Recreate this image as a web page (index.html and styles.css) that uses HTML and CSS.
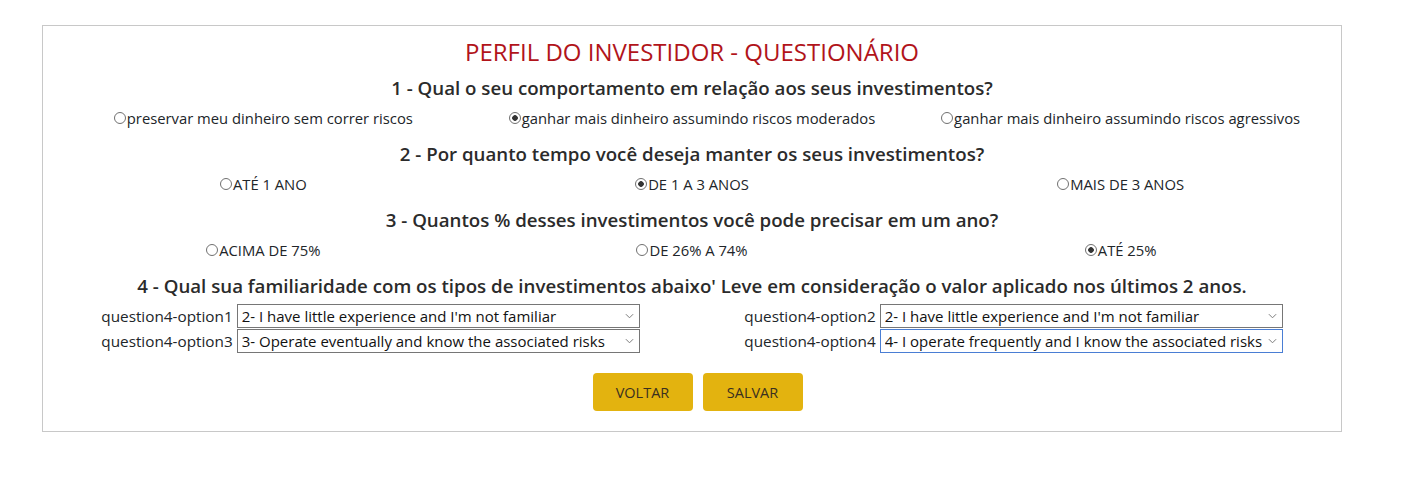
FILE: index.html
```html
<!DOCTYPE html>
<html lang="pt-BR">
<head>
<meta charset="utf-8">
<title>Perfil do Investidor</title>
<link rel="stylesheet" href="styles.css">
</head>
<body>
<div class="panel">
  <h1 class="title">PERFIL DO INVESTIDOR - QUESTIONÁRIO</h1>

  <section class="question">
    <h2 class="q-title">1 - Qual o seu comportamento em relação aos seus investimentos?</h2>
    <div class="options">
      <label class="opt"><input type="radio" name="q1">preservar meu dinheiro sem correr riscos</label>
      <label class="opt"><input type="radio" name="q1" checked>ganhar mais dinheiro assumindo riscos moderados</label>
      <label class="opt"><input type="radio" name="q1">ganhar mais dinheiro assumindo riscos agressivos</label>
    </div>
  </section>

  <section class="question">
    <h2 class="q-title">2 - Por quanto tempo você deseja manter os seus investimentos?</h2>
    <div class="options">
      <label class="opt"><input type="radio" name="q2">ATÉ 1 ANO</label>
      <label class="opt"><input type="radio" name="q2" checked>DE 1 A 3 ANOS</label>
      <label class="opt"><input type="radio" name="q2">MAIS DE 3 ANOS</label>
    </div>
  </section>

  <section class="question">
    <h2 class="q-title">3 - Quantos % desses investimentos você pode precisar em um ano?</h2>
    <div class="options">
      <label class="opt"><input type="radio" name="q3">ACIMA DE 75%</label>
      <label class="opt"><input type="radio" name="q3">DE 26% A 74%</label>
      <label class="opt"><input type="radio" name="q3" checked>ATÉ 25%</label>
    </div>
  </section>

  <section class="question q4">
    <h2 class="q-title">4 - Qual sua familiaridade com os tipos de investimentos abaixo' Leve em consideração o valor aplicado nos últimos 2 anos.</h2>
    <div class="selects">
      <div class="sel-row">
        <label class="sel-label" for="o1">question4-option1</label>
        <span class="sel-wrap">
          <select id="o1" class="sel">
            <option>1- I have no experience</option>
            <option selected>2- I have little experience and I'm not familiar</option>
            <option>3- Operate eventually and know the associated risks</option>
            <option>4- I operate frequently and I know the associated risks</option>
          </select>
          <svg class="chev" viewBox="0 0 10 6" width="9" height="6"><path d="M1 1 L5 5 L9 1" fill="none" stroke="#7a7a7a" stroke-width="1.1"/></svg>
        </span>
      </div>
      <div class="sel-row">
        <label class="sel-label" for="o2">question4-option2</label>
        <span class="sel-wrap">
          <select id="o2" class="sel">
            <option>1- I have no experience</option>
            <option selected>2- I have little experience and I'm not familiar</option>
            <option>3- Operate eventually and know the associated risks</option>
            <option>4- I operate frequently and I know the associated risks</option>
          </select>
          <svg class="chev" viewBox="0 0 10 6" width="9" height="6"><path d="M1 1 L5 5 L9 1" fill="none" stroke="#7a7a7a" stroke-width="1.1"/></svg>
        </span>
      </div>
      <div class="sel-row">
        <label class="sel-label" for="o3">question4-option3</label>
        <span class="sel-wrap">
          <select id="o3" class="sel">
            <option>1- I have no experience</option>
            <option>2- I have little experience and I'm not familiar</option>
            <option selected>3- Operate eventually and know the associated risks</option>
            <option>4- I operate frequently and I know the associated risks</option>
          </select>
          <svg class="chev" viewBox="0 0 10 6" width="9" height="6"><path d="M1 1 L5 5 L9 1" fill="none" stroke="#7a7a7a" stroke-width="1.1"/></svg>
        </span>
      </div>
      <div class="sel-row">
        <label class="sel-label" for="o4">question4-option4</label>
        <span class="sel-wrap">
          <select id="o4" class="sel sel-focus">
            <option>1- I have no experience</option>
            <option>2- I have little experience and I'm not familiar</option>
            <option>3- Operate eventually and know the associated risks</option>
            <option selected>4- I operate frequently and I know the associated risks</option>
          </select>
          <svg class="chev" viewBox="0 0 10 6" width="9" height="6"><path d="M1 1 L5 5 L9 1" fill="none" stroke="#7a7a7a" stroke-width="1.1"/></svg>
        </span>
      </div>
    </div>
  </section>

  <div class="actions">
    <button class="btn" type="button">VOLTAR</button>
    <button class="btn" type="button">SALVAR</button>
  </div>
</div>
</body>
</html>
```

FILE: styles.css
```css
* { box-sizing: border-box; }

body {
  margin: 0;
  background: #fff;
  font-family: "Open Sans", "Noto Sans", sans-serif;
  color: #212529;
}

.panel {
  width: 1300px;
  margin: 25px 0 0 42px;
  border: 1px solid #c8c8c8;
  padding: 11px 6px 20px;
}

.title {
  margin: 0;
  text-align: center;
  font-size: 24px;
  line-height: 30px;
  font-weight: 500;
  color: #b1141a;
}

.question {
  display: flex;
  flex-direction: column;
}

.q-title {
  margin: 0;
  text-align: center;
  font-size: 18.7px;
  line-height: 24px;
  font-weight: 600;
  color: #2b2b2b;
}

.title + .question .q-title { margin-top: 9px; }

.question + .question .q-title { margin-top: 13px; }

.options {
  display: grid;
  grid-template-columns: repeat(3, 1fr);
  margin-top: 7px;
}

.opt {
  display: flex;
  justify-content: center;
  align-items: center;
  font-size: 14.8px;
  line-height: 22px;
  color: #212529;
}

.opt input {
  appearance: none;
  -webkit-appearance: none;
  width: 12px;
  height: 12px;
  margin: 0 1px 0 0;
  border: 1px solid #707070;
  border-radius: 50%;
  background: #fff;
  flex: none;
}

.opt input:checked {
  background: radial-gradient(circle, #333 0 2.5px, #fff 3.1px);
}

.selects {
  display: grid;
  grid-template-columns: 1fr 1fr;
  row-gap: 1px;
  margin-top: 6px;
}

.sel-row {
  display: flex;
  justify-content: center;
  align-items: center;
  gap: 4px;
}

.sel-label {
  font-size: 15.3px;
  line-height: 24px;
  color: #212529;
}

.sel-wrap {
  position: relative;
  display: block;
}

.sel {
  appearance: none;
  -webkit-appearance: none;
  width: 403px;
  height: 24px;
  margin: 0;
  padding: 0 10px 0 4px;
  border: 1px solid #767676;
  border-radius: 0;
  background: #fff;
  font-family: "Open Sans", "Noto Sans", sans-serif;
  font-size: 15px;
  color: #111;
}

.sel-focus {
  border-color: #4a7ed4;
}

.chev {
  position: absolute;
  right: 6px;
  top: 9px;
  pointer-events: none;
}

.actions {
  display: flex;
  justify-content: center;
  gap: 10px;
  padding-left: 11px;
  margin-top: 20px;
}

.btn {
  width: 100px;
  height: 38px;
  border: 0;
  border-radius: 4px;
  background: #e3b30f;
  font-family: "Open Sans", "Noto Sans", sans-serif;
  font-size: 14.5px;
  color: #3a3020;
  padding: 0;
}
```
